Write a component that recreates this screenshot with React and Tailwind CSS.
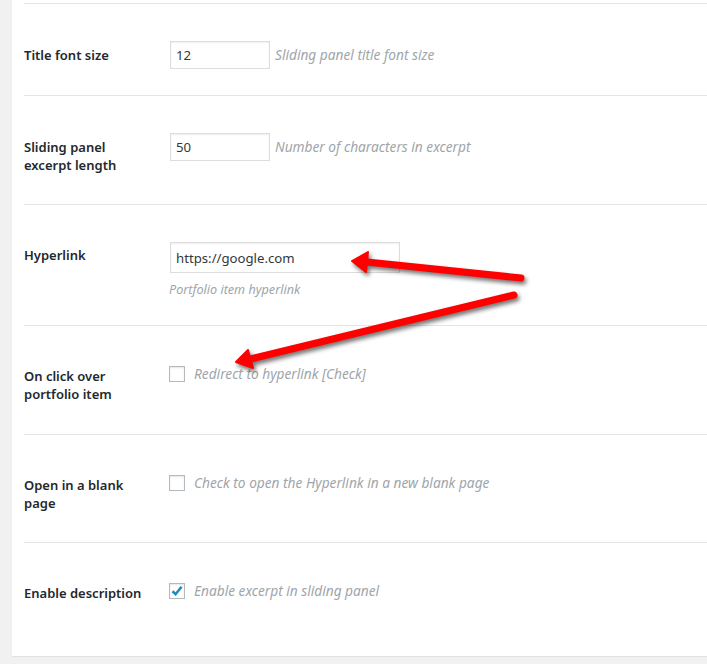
import React from "react";

const font = { fontFamily: '"Noto Sans", "Open Sans", sans-serif' };

const TextInput = ({ value, wide }) => (
  <input
    type="text"
    defaultValue={value}
    className={
      "border border-[#ddd] bg-white px-[5px] text-[13.2px] text-[#32373c] shadow-[inset_0_1px_2px_rgba(0,0,0,0.07)] outline-none " +
      (wide ? "h-[31px] w-[230px]" : "h-[28px] w-[100px]")
    }
  />
);

const Checkbox = ({ checked }) => (
  <span className="flex h-[16px] w-[16px] shrink-0 items-center justify-center border border-[#b4b9be] bg-white shadow-[inset_0_1px_2px_rgba(0,0,0,0.1)]">
    {checked && (
      <svg width="14" height="14" viewBox="0 0 14 14">
        <path d="M2.5 7.2 L5.6 10.2 L11.6 2.8" fill="none" stroke="#1e8cbe" strokeWidth="2.6" />
      </svg>
    )}
  </span>
);

const rows = [
  { label: "Title font size", h: "h-[92px]", type: "input", value: "12", desc: "Sliding panel title font size" },
  { label: ["Sliding panel", "excerpt length"], h: "h-[109px]", type: "input", value: "50", desc: "Number of characters in excerpt" },
  { label: "Hyperlink", h: "h-[121px]", type: "link", value: "https://google.com", desc: "Portfolio item hyperlink" },
  { label: ["On click over", "portfolio item"], h: "h-[109px]", type: "check", desc: "Redirect to hyperlink [Check]" },
  { label: ["Open in a blank", "page"], h: "h-[108px]", type: "check", desc: "Check to open the Hyperlink in a new blank page" },
  { label: "Enable description", h: "h-[114px]", type: "check", checked: true, desc: "Enable excerpt in sliding panel" },
];

const Arrow = ({ tail, tip, left, right }) => (
  <g>
    <line x1={tail[0]} y1={tail[1]} x2={(left[0] + right[0]) / 2} y2={(left[1] + right[1]) / 2} stroke="#ff0000" strokeWidth="7" strokeLinecap="round" />
    <polygon points={`${tip[0]},${tip[1]} ${left[0]},${left[1]} ${right[0]},${right[1]}`} fill="#ff0000" stroke="#ff0000" strokeWidth="2" strokeLinejoin="round" />
  </g>
);

export default function App() {
  return (
    <div className="relative h-[664px] w-[707px] overflow-hidden bg-[#f1f1f1]" style={font}>
      <div className="ml-[12px] h-[656px] bg-white pl-[12px] shadow-[0_1px_1px_rgba(0,0,0,0.06)]">
        <div className="h-[3px]" />
        {rows.map((row, i) => (
          <div
            key={i}
            className={"flex items-start border-t border-[#e5e5e5] " + row.h + (row.type === "check" ? " pt-[39px]" : " pt-[37px]")}
          >
            <div
              className={
                "w-[146px] shrink-0 text-[13px] font-semibold leading-[18px] text-[#23282d] " +
                (row.type === "check" ? "pt-[2px]" : row.type === "link" ? "pt-[4px]" : "pt-[5px]")
              }
            >
              {Array.isArray(row.label) ? row.label.map((l) => <div key={l}>{l}</div>) : row.label}
            </div>
            {row.type === "input" && (
              <div className="flex items-center">
                <TextInput value={row.value} />
                <span className="ml-[5px] text-[13.7px] italic text-[#a0a5aa]">{row.desc}</span>
              </div>
            )}
            {row.type === "link" && (
              <div className="flex flex-col">
                <TextInput value={row.value} wide />
                <span className="mt-[8px] ml-[-1px] text-[12.6px] italic text-[#a0a5aa]">{row.desc}</span>
              </div>
            )}
            {row.type === "check" && (
              <div className="flex items-center">
                <span className="ml-[-1px]">
                  <Checkbox checked={row.checked} />
                </span>
                <span className="ml-[9px] text-[13.7px] italic leading-[18px] text-[#a0a5aa]">{row.desc}</span>
              </div>
            )}
          </div>
        ))}
      </div>
      <svg className="pointer-events-none absolute left-0 top-0" width="707" height="664" style={{ filter: "drop-shadow(2px 3px 2px rgba(0,0,0,0.55))" }}>
        <Arrow tail={[521, 278]} tip={[352, 261]} left={[368, 252]} right={[366, 272]} />
        <Arrow tail={[514, 295]} tip={[236, 362]} left={[248, 350]} right={[253, 368]} />
      </svg>
    </div>
  );
}
